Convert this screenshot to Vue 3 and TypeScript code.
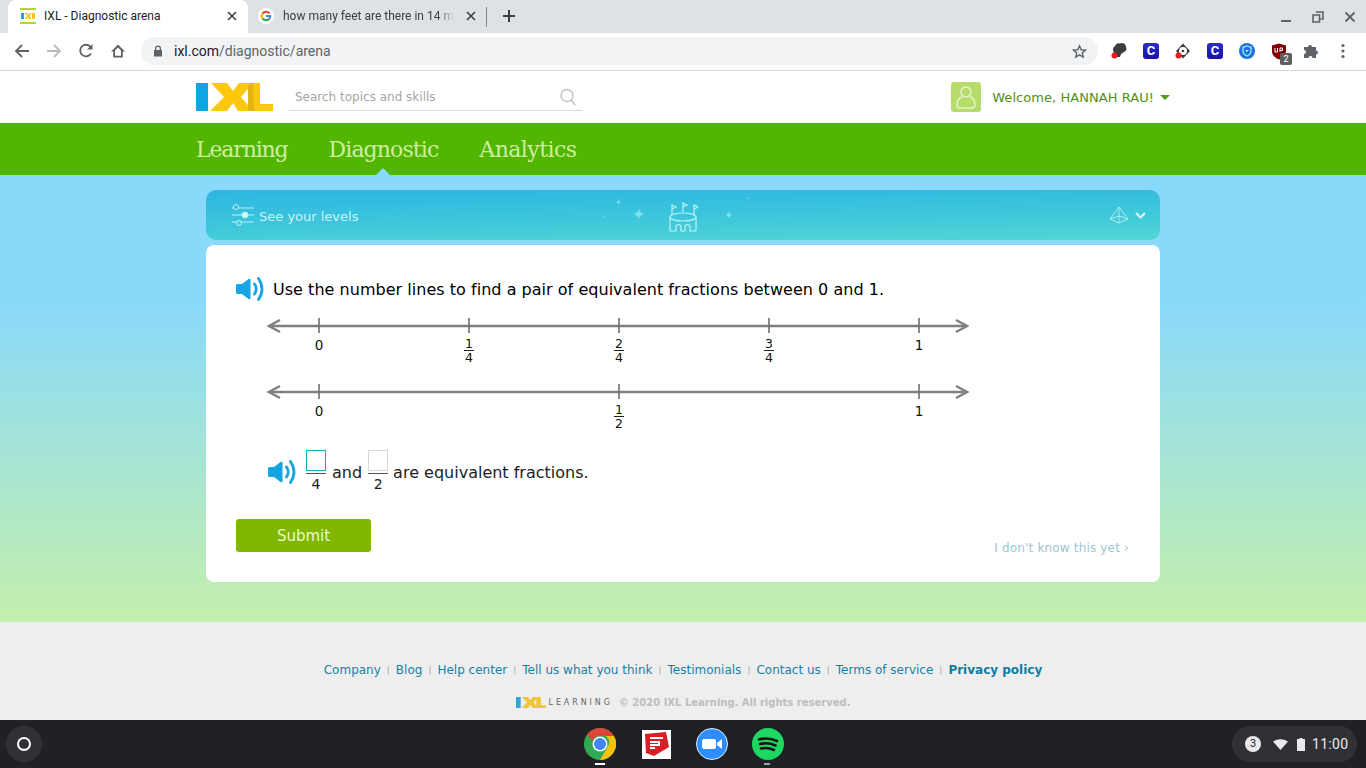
<script setup lang="ts">
/**
 * Diagnostic arena page inside a browser window, with the Chrome OS shelf below.
 */
interface Tick {
  x: number
  whole?: string
  num?: string
  den?: string
}

const quarterLine: Tick[] = [
  { x: 53, whole: '0' },
  { x: 203, num: '1', den: '4' },
  { x: 353, num: '2', den: '4' },
  { x: 503, num: '3', den: '4' },
  { x: 653, whole: '1' },
]
const halfLine: Tick[] = [
  { x: 53, whole: '0' },
  { x: 353, num: '1', den: '2' },
  { x: 653, whole: '1' },
]
const lines = [quarterLine, halfLine]

const footerLinks = ['Company', 'Blog', 'Help center', 'Tell us what you think', 'Testimonials', 'Contact us', 'Terms of service']
</script>

<template>
  <div class="screen">
    <div class="tabstrip">
      <div class="tab active">
        <svg class="favicon" width="16" height="16" viewBox="0 0 16 16">
          <rect y="0" width="16" height="2" fill="#b5d334" />
          <rect y="14" width="16" height="2" fill="#b5d334" />
          <rect x="1" y="5" width="3" height="6" fill="#1aa6e0" />
          <path d="M4 5h3l1.500 2L10 5h2L9.500 8l2 3H9L8 9.500 6.500 11H4.500l3-3z" fill="#f5c518" />
          <rect x="12" y="5" width="3" height="6" fill="#f5c518" />
        </svg>
        <span class="tab-title">IXL - Diagnostic arena</span>
        <svg class="tab-close" width="10" height="10" viewBox="0 0 10 10"><path d="M1 1l8 8M9 1l-8 8" stroke="#3c4043" stroke-width="1.600" /></svg>
      </div>
      <div class="tab inactive">
        <svg class="favicon" width="16" height="16" viewBox="0 0 16 16">
          <circle cx="8" cy="8" r="8" fill="#fff" />
          <path d="M12.500 5.200A5.300 5.300 0 0 0 3.800 4.800l1.600 1.500a3.200 3.200 0 0 1 5.400-.2z" fill="#ea4335" />
          <path d="M3.800 4.800a5.300 5.300 0 0 0 0 6.400l1.600-1.500a3.200 3.200 0 0 1 0-3.400z" fill="#fbbc05" />
          <path d="M3.800 11.200a5.300 5.300 0 0 0 8.200.2l-1.700-1.300a3.200 3.200 0 0 1-4.900-.4z" fill="#34a853" />
          <path d="M13.300 7H8v2.100h3a2.500 2.500 0 0 1-.7 1l1.700 1.300A5.300 5.300 0 0 0 13.300 7z" fill="#4285f4" />
        </svg>
        <span class="tab-title fade">how many feet are there in 14 m</span>
        <svg class="tab-close" width="10" height="10" viewBox="0 0 10 10"><path d="M1 1l8 8M9 1l-8 8" stroke="#3c4043" stroke-width="1.600" /></svg>
      </div>
      <div class="tab-sep"></div>
      <svg class="new-tab" width="14" height="14" viewBox="0 0 14 14"><path d="M7 1v12M1 7h12" stroke="#3c4043" stroke-width="2" /></svg>
      <div class="win-controls">
        <svg width="12" height="12" viewBox="0 0 12 12"><path d="M1 10h10" stroke="#5f6368" stroke-width="2" /></svg>
        <svg width="12" height="12" viewBox="0 0 12 12"><path d="M4 1h7v7H8.500M1 4h6.500v7H1z" fill="none" stroke="#5f6368" stroke-width="1.600" /></svg>
        <svg width="12" height="12" viewBox="0 0 12 12"><path d="M1.500 1.500l9 9M10.500 1.500l-9 9" stroke="#5f6368" stroke-width="1.800" /></svg>
      </div>
    </div>

    <div class="toolbar">
      <div class="nav-buttons">
        <svg width="16" height="16" viewBox="0 0 16 16"><path d="M15 8H2M8 2L2 8l6 6" fill="none" stroke="#5f6368" stroke-width="1.800" /></svg>
        <svg width="16" height="16" viewBox="0 0 16 16"><path d="M1 8h13M8 2l6 6-6 6" fill="none" stroke="#b9bcc0" stroke-width="1.800" /></svg>
        <svg width="16" height="16" viewBox="0 0 16 16"><path d="M13 10.500A5.800 5.800 0 1 1 12.600 4" fill="none" stroke="#5f6368" stroke-width="1.800" /><path d="M14.500 1v5.500H9z" fill="#5f6368" /></svg>
        <svg width="16" height="16" viewBox="0 0 16 16"><path d="M8 1.500L1 8.500h2.200V14.500h9.600V8.500H15zM5 12.800V7.500l3-3 3 3v5.300z" fill="#5f6368" /></svg>
      </div>
      <div class="omnibox">
        <svg width="10" height="12" viewBox="0 0 10 12"><path d="M2 5V3.500a3 3 0 0 1 6 0V5h1v6.500H1V5zm1.300 0h3.400V3.500a1.700 1.700 0 0 0-3.400 0z" fill="#5f6368" /></svg>
        <span class="url"><b>ixl.com</b>/diagnostic/arena</span>
        <svg class="star" width="15" height="15" viewBox="0 0 24 24"><path d="M12 3l2.700 6.200 6.800.6-5.100 4.500 1.500 6.600L12 17.400 6.100 20.900l1.500-6.600L2.500 9.800l6.800-.6z" fill="none" stroke="#5f6368" stroke-width="2.200" /></svg>
      </div>
      <div class="extensions">
        <span class="ext">
          <svg width="18" height="18" viewBox="0 0 18 18"><path d="M5 4a4 4 0 0 1 5-2.500A4 4 0 0 1 16 5a3.500 3.500 0 0 1-2 5l-3 2-1 3H7l-1-3a4.500 4.500 0 0 1-1-8z" fill="#3c3c3c" /><circle cx="4.500" cy="13.500" r="3" fill="#e51c14" /></svg>
        </span>
        <span class="ext"><span class="c-badge">C</span></span>
        <span class="ext">
          <svg width="18" height="18" viewBox="0 0 18 18"><path d="M9 1.500L16 9l-7 7.500L2 9z" fill="#3c3c3c" /><circle cx="9" cy="9" r="4" fill="#fff" /><circle cx="9" cy="9" r="1.300" fill="#3c3c3c" /><circle cx="4.500" cy="13.500" r="3" fill="#e51c14" /></svg>
        </span>
        <span class="ext"><span class="c-badge">C</span></span>
        <span class="ext">
          <svg width="16" height="16" viewBox="0 0 16 16"><circle cx="8" cy="8" r="8" fill="#1a73d9" /><path d="M8 3l4 1.300v3.500C12 10.500 10 12.200 8 13c-2-.8-4-2.500-4-5.200V4.300z" fill="none" stroke="#a8e4ff" stroke-width="1.300" /><path d="M6.200 7h3.600L8 9.500z" fill="#a8e4ff" /></svg>
        </span>
        <span class="ext ublock">
          <svg width="16" height="17" viewBox="0 0 16 17"><path d="M8 .5L15 2.500v6c0 4-3.500 6.500-7 8-3.500-1.500-7-4-7-8v-6z" fill="#800000" /><path d="M4 5v4h2.500V5M9 9V5h2.500v2.500H9" fill="none" stroke="#fff" stroke-width="1" /></svg>
          <span class="count">2</span>
        </span>
        <span class="ext">
          <svg width="16" height="16" viewBox="0 0 16 16"><path d="M1 4h4a2 2 0 0 1 4 0h4v3.500a2 2 0 0 1 0 4V15H9.500a2 2 0 0 0-4 0H1v-4a2 2 0 0 0 0-4z" fill="#5f6368" /></svg>
        </span>
        <span class="ext">
          <svg width="4" height="16" viewBox="0 0 4 16"><circle cx="2" cy="2.500" r="1.600" fill="#5f6368" /><circle cx="2" cy="8" r="1.600" fill="#5f6368" /><circle cx="2" cy="13.500" r="1.600" fill="#5f6368" /></svg>
        </span>
      </div>
    </div>

    <header class="site-header">
      <div class="site-header-left">
        <svg class="logo" width="77" height="28" viewBox="0 0 77 28">
          <rect width="12" height="28" fill="#0ea5e4" />
          <path d="M52 0h12v21h13v7H52z" fill="#fdc80c" />
          <path d="M15 0h16l6 8 6-8h14L45 14l12 14H42l-5-8-6 8H14l14-14z" fill="#fdc80c" />
          <path d="M52 3l3-3h2l1 28h-6z" fill="#e2b417" />
        </svg>
        <div class="search">
          <span>Search topics and skills</span>
          <svg width="18" height="18" viewBox="0 0 18 18"><circle cx="8" cy="7.500" r="6" fill="none" stroke="#c4c4c4" stroke-width="1.500" /><path d="M12 12l4 5" stroke="#c4c4c4" stroke-width="1.800" /></svg>
        </div>
      </div>
      <div class="welcome">
        <span class="avatar">
          <svg width="22" height="26" viewBox="0 0 22 26" fill="none" stroke="#e6f4c8" stroke-width="1.500"><circle cx="11" cy="8" r="5" /><path d="M7.500 12.500C4 14 2 17 2 20.500 2 22.500 3.500 24 5.500 24h11c2 0 3.500-1.500 3.500-3.500 0-3.500-2-6.500-5.500-8" /></svg>
        </span>
        <span class="welcome-text">Welcome, HANNAH RAU!</span>
        <span class="caret"></span>
      </div>
    </header>

    <nav class="main-nav">
      <a>Learning</a>
      <a class="current">Diagnostic</a>
      <a>Analytics</a>
    </nav>

    <main class="arena">
      <div class="levels-bar">
        <div class="levels-left">
          <svg width="23" height="22" viewBox="0 0 23 22" fill="none" stroke="#b8f2f6" stroke-width="1">
            <path d="M1 4h22M1 11h22M1 18h22" />
            <circle cx="5" cy="3" r="2.500" fill="#38bcd9" />
            <circle cx="14" cy="11" r="3" fill="#d6fafc" />
            <circle cx="8" cy="19" r="2.500" fill="#48cdd8" />
          </svg>
          <span>See your levels</span>
        </div>
        <div class="levels-mid">
          <span class="spark faint-left">✦</span>
          <span class="spark small">✦</span>
          <span class="spark">✦</span>
          <svg width="30" height="31" viewBox="0 0 30 31" fill="none" stroke="#b8f2f6" stroke-width="1.200">
            <path d="M4 13V3l4 2-4 2M15 10V1l4 2-4 2M26 13V3l4 2-4 2" />
            <ellipse cx="15" cy="15" rx="13" ry="4" />
            <path d="M2 15v13a1 1 0 0 0 1 1h5v-4a2.500 2.500 0 0 1 5 0v4h4v-4a2.500 2.500 0 0 1 5 0v4h5a1 1 0 0 0 1-1V15" />
          </svg>
          <span class="spark right">✦</span>
          <span class="spark faint-right">✦</span>
        </div>
        <div class="levels-right">
          <svg width="20" height="18" viewBox="0 0 20 18" fill="none" stroke="#a9eef2" stroke-width="1">
            <path d="M10 1L1 13l9 4 9-4zM10 1v16M1 13l9-3 9 3" />
          </svg>
          <svg width="11" height="7" viewBox="0 0 11 7"><path d="M1 1l4.500 4.500L10 1" fill="none" stroke="#d6fafc" stroke-width="2" /></svg>
        </div>
      </div>

      <section class="card">
        <div class="prompt">
          <svg class="speaker" width="28" height="26" viewBox="0 0 28 26">
            <path d="M0 9.500Q0 8 1.500 8H6l6.500-5q2-1 2 1v18q0 2-2 1L6 18H1.500Q0 18 0 16.500z" fill="#16a5e1" />
            <path d="M18.500 8q3.500 5 0 10M22.500 2.500q7 10.500 0 21" fill="none" stroke="#16a5e1" stroke-width="2.800" stroke-linecap="round" />
          </svg>
          <span>Use the number lines to find a pair of equivalent fractions between 0 and 1.</span>
        </div>

        <div class="number-lines">
          <svg v-for="(ticks, i) in lines" :key="i" class="number-line" width="706" height="66" viewBox="0 0 706 66">
            <path d="M3 12h698" stroke="#808080" stroke-width="2.500" />
            <path d="M14 6L3 12l11 6M690 6l11 6-11 6" fill="none" stroke="#808080" stroke-width="2.500" />
            <g v-for="t in ticks" :key="t.x">
              <path :d="`M${t.x} 4v15`" stroke="#6e6e6e" stroke-width="1.600" />
              <text v-if="t.whole" :x="t.x" y="36" class="tick-label">{{ t.whole }}</text>
              <template v-else>
                <text :x="t.x" y="34" class="tick-label small">{{ t.num }}</text>
                <path :d="`M${t.x - 5} 36.500h10`" stroke="#222" stroke-width="1" />
                <text :x="t.x" y="47.500" class="tick-label small">{{ t.den }}</text>
              </template>
            </g>
          </svg>
        </div>

        <div class="answer">
          <svg class="speaker" width="28" height="26" viewBox="0 0 28 26">
            <path d="M0 9.500Q0 8 1.500 8H6l6.500-5q2-1 2 1v18q0 2-2 1L6 18H1.500Q0 18 0 16.500z" fill="#16a5e1" />
            <path d="M18.500 8q3.500 5 0 10M22.500 2.500q7 10.500 0 21" fill="none" stroke="#16a5e1" stroke-width="2.800" stroke-linecap="round" />
          </svg>
          <span class="fraction">
            <span class="blank focused"></span>
            <span class="den">4</span>
          </span>
          <span>and</span>
          <span class="fraction">
            <span class="blank"></span>
            <span class="den">2</span>
          </span>
          <span class="answer-tail">are equivalent fractions.</span>
        </div>

        <div class="card-actions">
          <button class="submit" type="button">Submit</button>
          <a class="dont-know">I don't know this yet ›</a>
        </div>
      </section>
    </main>

    <footer class="site-footer">
      <div class="footer-links">
        <template v-for="link in footerLinks" :key="link">
          <a>{{ link }}</a>
          <i>|</i>
        </template>
        <a class="strong">Privacy policy</a>
      </div>
      <div class="copyright">
        <svg class="mini-logo" width="30" height="13" viewBox="0 0 77 28">
          <rect width="12" height="28" fill="#2ba7dc" />
          <path d="M52 0h12v21h13v7H52z" fill="#efc53c" />
          <path d="M15 0h16l6 8 6-8h14L45 14l12 14H42l-5-8-6 8H14l14-14z" fill="#efc53c" />
        </svg>
        <span class="learning">LEARNING</span>
        <span class="copy-text">© 2020 IXL Learning. All rights reserved.</span>
      </div>
    </footer>

    <div class="shelf">
      <span class="launcher"><span class="launcher-ring"></span></span>
      <div class="shelf-apps">
        <span class="app open">
          <svg width="32" height="32" viewBox="0 0 32 32">
            <circle cx="16" cy="16" r="16" fill="#34a853" />
            <path d="M16 0a16 16 0 0 1 13.900 8H16a8 8 0 0 0-7.500 5L3.100 6.500A16 16 0 0 1 16 0z" fill="#db4437" />
            <path d="M29.900 8A16 16 0 0 1 16 32l6.900-12a8 8 0 0 0-.9-12z" fill="#f4c20d" />
            <circle cx="16" cy="16" r="7.500" fill="#fff" />
            <circle cx="16" cy="16" r="6" fill="#4285f4" />
          </svg>
        </span>
        <span class="app">
          <svg width="29" height="29" viewBox="0 0 29 29">
            <rect width="29" height="29" fill="#fff" />
            <path d="M3 4l21-2 3 15-15 9-8-3z" fill="#d81f26" />
            <path d="M8 8h13M8 12h9v3H8M8 18h5" stroke="#fff" stroke-width="2" fill="none" />
          </svg>
        </span>
        <span class="app">
          <svg width="32" height="32" viewBox="0 0 32 32">
            <circle cx="16" cy="16" r="15.500" fill="#2d8cff" stroke="#dfeeff" stroke-width="1" />
            <rect x="6" y="11" width="14" height="10" rx="2" fill="#fff" />
            <path d="M21 15l5-4v10l-5-4z" fill="#fff" />
          </svg>
        </span>
        <span class="app open dim">
          <svg width="32" height="32" viewBox="0 0 32 32">
            <circle cx="16" cy="16" r="16" fill="#1ed760" />
            <path d="M7 11.500q9-2.500 18 1.500M8 16q8-2 15.500 1.500M9 20.500q7-1.500 13 1.500" fill="none" stroke="#191414" stroke-width="2.600" stroke-linecap="round" />
          </svg>
        </span>
      </div>
      <div class="tray">
        <span class="notif">3</span>
        <svg width="15" height="11" viewBox="0 0 15 11"><path d="M0 2.500Q7.500-2 15 2.500L7.500 11z" fill="#e8eaed" /></svg>
        <svg width="8" height="13" viewBox="0 0 8 13"><path d="M2.500 0h3v1H8v12H0V1h2.500z" fill="#e8eaed" /></svg>
        <span class="clock">11:00</span>
      </div>
    </div>
  </div>
</template>

<style scoped>
.screen {
  width: 1366px;
  height: 768px;
  display: flex;
  flex-direction: column;
  overflow: hidden;
  font-family: "DejaVu Sans", Verdana, sans-serif;
}

/* browser chrome */
.tabstrip {
  height: 33px;
  flex: none;
  background: #dee1e6;
  display: flex;
  align-items: flex-end;
  padding-left: 8px;
  font-family: Roboto, sans-serif;
  font-size: 12px;
  color: #3c4043;
}

.tab {
  height: 33px;
  width: 240px;
  display: flex;
  align-items: center;
  padding: 0 11px 2px 12px;
  box-sizing: border-box;
}

.tab.active {
  background: #fff;
  border-radius: 8px 8px 0 0;
  color: #202124;
}

.tab.inactive {
  width: 239px;
  padding-left: 10px;
}

.favicon {
  flex: none;
  margin-right: 8px;
}

.tab-title {
  flex: none;
  white-space: nowrap;
}

.tab.inactive .tab-title {
  margin-left: 1px;
}

.fade {
  -webkit-mask-image: linear-gradient(90deg, #000 calc(100% - 16px), transparent);
  mask-image: linear-gradient(90deg, #000 calc(100% - 16px), transparent);
}

.tab-close {
  flex: none;
  margin-left: auto;
}

.tab-sep {
  width: 1px;
  height: 20px;
  background: #80868b;
  margin: 0 0 6px -1px;
}

.new-tab {
  margin: 0 0 10px 15px;
}

.win-controls {
  margin-left: auto;
  display: flex;
  gap: 20px;
  padding: 0 10px 10px 0;
}

.toolbar {
  height: 36px;
  padding-bottom: 1px;
  flex: none;
  box-sizing: content-box;
  background: #fff;
  border-bottom: 1px solid #d5d7da;
  display: flex;
  align-items: center;
}

.nav-buttons {
  display: flex;
  gap: 16px;
  padding-left: 14px;
  width: 127px;
  box-sizing: border-box;
}

.omnibox {
  width: 957px;
  height: 28px;
  margin-left: 14px;
  border-radius: 14px;
  background: #f1f3f4;
  display: flex;
  align-items: center;
  padding: 0 11px 0 12px;
  box-sizing: border-box;
}

.url {
  margin-left: 11px;
  font: 14px Roboto, sans-serif;
  color: #5f6368;
}

.url b {
  font-weight: 400;
  color: #202124;
}

.star {
  margin-left: auto;
}

.extensions {
  display: flex;
  margin-left: 5px;
}

.ext {
  width: 32px;
  height: 24px;
  display: flex;
  align-items: center;
  justify-content: center;
  position: relative;
}

.c-badge {
  width: 16px;
  height: 16px;
  border-radius: 3px;
  background: linear-gradient(180deg, #2a2ad6, #1a12a8);
  color: #fff;
  font: 700 13px/16px Roboto, sans-serif;
  text-align: center;
}

.count {
  position: absolute;
  left: 17px;
  top: 14px;
  width: 12px;
  height: 12px;
  border-radius: 2px;
  background: #5f5f5f;
  color: #fff;
  font: 9px/12px Roboto, sans-serif;
  text-align: center;
}

/* site header */
.site-header {
  height: 52px;
  flex: none;
  background: #fff;
  display: flex;
  align-items: center;
  justify-content: space-between;
  padding: 0 196px;
}

.site-header-left {
  display: flex;
  align-items: center;
}

.logo {
  display: block;
  margin-top: -1px;
}

.search {
  width: 293px;
  height: 28px;
  margin-left: 16px;
  border-bottom: 1px solid #d9d9d9;
  display: flex;
  align-items: center;
  justify-content: space-between;
  padding: 0 5px 0 6px;
  box-sizing: border-box;
  font: 12px "DejaVu Sans", sans-serif;
  color: #a5a5a5;
}

.welcome {
  display: flex;
  align-items: center;
  color: #4f8f1c;
  font-size: 13px;
  letter-spacing: 0.05px;
}

.avatar {
  width: 30px;
  height: 30px;
  border-radius: 3px;
  background: #b6dc6c;
  display: flex;
  align-items: center;
  justify-content: center;
  margin-right: 11px;
}

.caret {
  margin-left: 6px;
  width: 0;
  height: 0;
  border-style: solid;
  border-width: 5px 5px 0;
  border-color: #52a010 transparent transparent;
}

/* green nav */
.main-nav {
  height: 52px;
  flex: none;
  background: #52b500;
  display: flex;
  align-items: center;
  gap: 41px;
  padding-left: 196px;
  font: 300 22px "DejaVu Serif", "Liberation Serif", serif;
  color: #cdeea0;
}

.main-nav a {
  position: relative;
  padding-top: 1px;
  line-height: 51px;
  letter-spacing: -0.9px;
}

.main-nav a:first-child {
  letter-spacing: -1.15px;
}

.main-nav a:last-child {
  letter-spacing: -0.55px;
}

.main-nav a.current::after {
  content: "";
  position: absolute;
  left: 50%;
  bottom: 0;
  margin-left: -7px;
  border-style: solid;
  border-width: 0 7px 7px;
  border-color: transparent transparent #8ad9fa;
}

/* arena */
.arena {
  height: 447px;
  flex: none;
  box-sizing: border-box;
  padding-top: 15px;
  background: linear-gradient(180deg, #89d9fb 0%, #89d9fb 28%, #c4f0ac 100%);
  display: flex;
  flex-direction: column;
  align-items: center;
}

.levels-bar {
  width: 954px;
  height: 50px;
  flex: none;
  border-radius: 10px;
  background: linear-gradient(179deg, #2eb5e3 0%, #3cc5dc 50%, #52d6d4 100%);
  display: flex;
  align-items: center;
  justify-content: space-between;
  position: relative;
  box-sizing: border-box;
  padding: 0 14px 0 25px;
}

.levels-left {
  display: flex;
  align-items: center;
  gap: 5px;
  font-size: 13px;
  color: #c9f4f6;
}

.levels-left span {
  padding-top: 2px;
}

.levels-mid {
  position: absolute;
  left: 462px;
  top: 12px;
  color: #7fe0ea;
  display: flex;
}

.spark {
  position: absolute;
  left: -36px;
  top: 5px;
  font-size: 16px;
  line-height: 16px;
}

.spark.small {
  left: -53px;
  top: -3px;
  font-size: 8px;
  line-height: 8px;
}

.spark.right {
  left: 56px;
  top: 8px;
  font-size: 11px;
  line-height: 11px;
}

.spark.faint-left {
  left: -66px;
  top: 12px;
  font-size: 5px;
  line-height: 5px;
  opacity: 0.6;
}

.spark.faint-right {
  left: 78px;
  top: -6px;
  font-size: 5px;
  line-height: 5px;
  opacity: 0.6;
}

.levels-right {
  display: flex;
  align-items: center;
  gap: 6px;
}

.card {
  width: 954px;
  height: 337px;
  flex: none;
  margin-top: 5px;
  background: #fff;
  border-radius: 8px;
  box-sizing: border-box;
  padding: 31px 30px 0;
  color: #000;
  display: flex;
  flex-direction: column;
}

.prompt {
  display: flex;
  align-items: center;
  gap: 9px;
  font-size: 16px;
  letter-spacing: 0.03px;
  height: 26px;
}

.number-lines {
  margin: 12px 0 0 30px;
  display: flex;
  flex-direction: column;
}

.number-line {
  display: block;
}

.tick-label {
  font: 13.500px "DejaVu Sans", sans-serif;
  fill: #111;
  text-anchor: middle;
}

.tick-label.small {
  font-size: 12.500px;
}

.answer {
  display: flex;
  align-items: center;
  gap: 6px;
  margin: 4px 0 0 32px;
  font-size: 16px;
  color: #222;
}

.answer .speaker {
  margin-right: 4px;
}

.answer-tail {
  margin-left: -1px;
}

.fraction {
  display: flex;
  flex-direction: column;
  align-items: center;
  width: 20px;
  font-size: 14px;
}

.blank {
  width: 20px;
  height: 21px;
  box-sizing: border-box;
  border: 1px solid #d8d8d8;
}

.blank.focused {
  border-color: #20a4c8;
}

.den {
  width: 20px;
  margin-top: 2px;
  border-top: 1px solid #555;
  text-align: center;
  line-height: 20px;
}

.card-actions {
  display: flex;
  justify-content: space-between;
  align-items: flex-end;
  margin-top: 25px;
}

.submit {
  width: 135px;
  height: 33px;
  border: 0;
  border-radius: 3px;
  background: #80b800;
  color: #eef8cf;
  font: 15px "DejaVu Sans", sans-serif;
  padding: 0;
}

.dont-know {
  font-size: 12px;
  letter-spacing: 0.17px;
  color: #9fc6cf;
  margin-bottom: -3px;
  margin-right: 1px;
}

/* footer */
.site-footer {
  height: 98px;
  flex: none;
  background: #eee;
  display: flex;
  flex-direction: column;
  align-items: center;
  padding-top: 40px;
  box-sizing: border-box;
}

.footer-links {
  display: flex;
  align-items: center;
  gap: 6px;
  font-size: 12px;
  color: #1a80a6;
  height: 15px;
}

.footer-links i {
  font-style: normal;
  font-size: 9px;
  color: #aaa;
}

.footer-links .strong {
  font-weight: 700;
  color: #0f7ba3;
}

.copyright {
  display: flex;
  align-items: center;
  margin-top: 18px;
  font-size: 10px;
  height: 14px;
}

.mini-logo {
  display: block;
}

.learning {
  margin-left: 3px;
  font-size: 8px;
  letter-spacing: 2.900px;
  color: #666;
}

.copy-text {
  margin-left: 6px;
  font-weight: 700;
  color: #bdbdbd;
}

/* chrome os shelf */
.shelf {
  height: 48px;
  flex: none;
  background: #202124;
  display: flex;
  align-items: center;
  position: relative;
  padding-left: 6px;
}

.launcher {
  width: 36px;
  height: 36px;
  border-radius: 50%;
  background: #303134;
  display: flex;
  align-items: center;
  justify-content: center;
}

.launcher-ring {
  width: 10px;
  height: 10px;
  border: 2.500px solid #fff;
  border-radius: 50%;
}

.shelf-apps {
  position: absolute;
  left: 572px;
  top: 0;
  display: flex;
}

.app {
  width: 56px;
  height: 48px;
  display: flex;
  align-items: center;
  justify-content: center;
  position: relative;
}

.app.open::after {
  content: "";
  position: absolute;
  left: 23px;
  bottom: 3px;
  width: 10px;
  height: 2px;
  background: #fff;
}

.app.dim::after {
  left: 24px;
  width: 6px;
  background: #9aa0a6;
}

.tray {
  margin-left: auto;
  margin-right: 9px;
  width: 125px;
  height: 36px;
  border-radius: 18px;
  background: #303134;
  display: flex;
  align-items: center;
  box-sizing: border-box;
  padding-left: 13px;
  gap: 9px;
  color: #e8eaed;
  font: 14px Roboto, sans-serif;
}

.notif {
  width: 16px;
  height: 16px;
  border-radius: 50%;
  background: #e8eaed;
  color: #202124;
  font-size: 11px;
  line-height: 16px;
  text-align: center;
  margin-right: 3px;
}

.clock {
  margin-left: -2px;
  letter-spacing: 0.3px;
}
</style>
